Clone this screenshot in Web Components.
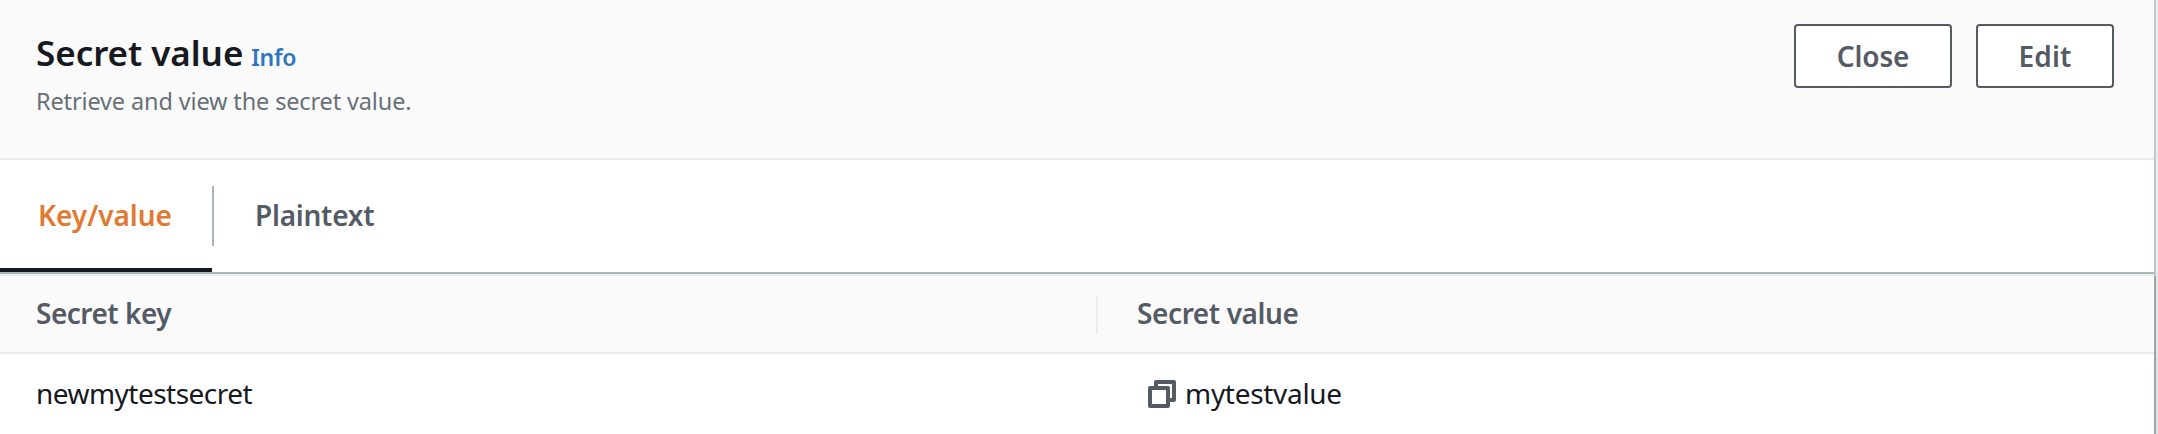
<!DOCTYPE html>
<html lang="en">
<head>
<meta charset="utf-8">
<title>Secret value</title>
<style>
html, body { margin: 0; height: 100%; background: #fff; overflow: hidden; }
body { font-family: "Noto Sans", "Open Sans", sans-serif; font-size: 28px; line-height: 44px; color: #16191f; }
</style>
</head>
<body>
<secret-panel>
  <panel-header slot="header">
    <span slot="title">Secret value</span>
    <span slot="info">Info</span>
    <span slot="description">Retrieve and view the secret value.</span>
    <action-button slot="actions">Close</action-button>
    <action-button slot="actions" style="--button-width:138px;--spacing:.1px">Edit</action-button>
  </panel-header>
  <tab-bar slot="tabs">
    <tab-item active>Key/value</tab-item>
    <tab-item>Plaintext</tab-item>
  </tab-bar>
  <secret-table>
    <span slot="key-head">Secret key</span>
    <span slot="value-head">Secret value</span>
    <span slot="key">newmytestsecret</span>
    <copy-value slot="value">mytestvalue</copy-value>
  </secret-table>
</secret-panel>
<script>
const define = (name, html) => customElements.define(name, class extends HTMLElement {
  constructor() {
    super();
    this.attachShadow({ mode: 'open' }).innerHTML = html;
  }
});

define('secret-panel', `
<style>
:host { display: grid; grid-template-columns: 1fr 2px 2px; height: 434px; }
main { min-width: 0; }
.edge { background: linear-gradient(#bfc8c8 0 276px, #9ca5a8 276px); }
.outer { background: linear-gradient(#eaeded 0 276px, #e1e4e5 276px); }
</style>
<main><slot name="header"></slot><slot name="tabs"></slot><slot></slot></main>
<div class="edge"></div><div class="outer"></div>`);

define('panel-header', `
<style>
:host { display: flex; justify-content: space-between; align-items: flex-start; box-sizing: border-box;
  height: 160px; padding: 24px 40px 0 36px; background: #fafafa; border-bottom: 2px solid #eaeded; }
.text { padding-top: 7px; }
.heading { display: flex; align-items: baseline; gap: 8px; height: 44px; white-space: nowrap; }
h2 { margin: 0; font-size: 35px; font-weight: 600; line-height: 44px; letter-spacing: -.05px; }
.info { font-size: 23px; font-weight: 600; letter-spacing: -.3px; color: #2f76c2; }
p { margin: 8px 0 0; font-size: 23.5px; line-height: 36px; letter-spacing: -.14px; color: #687078; }
.actions { display: flex; gap: 24px; }
</style>
<div class="text">
  <div class="heading"><h2><slot name="title"></slot></h2><span class="info"><slot name="info"></slot></span></div>
  <p><slot name="description"></slot></p>
</div>
<div class="actions"><slot name="actions"></slot></div>`);

define('action-button', `
<style>
:host { display: block; width: var(--button-width, 158px); }
button { display: block; width: 100%; height: 64px; padding: 0; box-sizing: border-box; background: #fff;
  border: 2px solid #545b64; border-radius: 4px; font: 600 28px/58px "Noto Sans", sans-serif;
  letter-spacing: var(--spacing, -.1px); color: #545b64; }
</style>
<button><slot></slot></button>`);

define('tab-bar', `
<style>
:host { display: flex; box-sizing: border-box; height: 114px; border-bottom: 2px solid #aab7b8; }
</style>
<slot></slot>`);

define('tab-item', `
<style>
:host { display: flex; flex-direction: column; justify-content: space-between; color: #545b64;
  font-weight: 600; letter-spacing: -.25px; }
.label { margin-top: 26px; height: 60px; padding: 7px 40px 0 41px; box-sizing: border-box; }
.bar { height: 4px; }
:host([active]) { color: #e07a33; letter-spacing: -.05px; }
:host([active]) .label { width: 214px; padding: 7px 0 0 38px; border-right: 2px solid #aab7b8; }
:host([active]) .bar { margin-right: 2px; background: #16191f; }
</style>
<div class="label"><slot></slot></div><div class="bar"></div>`);

define('secret-table', `
<style>
:host { display: block; }
.row { display: grid; grid-template-columns: 1098px 1fr; }
.head { height: 80px; box-sizing: border-box; background: #fafafa; border: solid #eaeded; border-width: 2px 0;
  font-weight: 600; color: #545b64; letter-spacing: -.5px; }
.head div { height: 38px; margin-top: 20px; padding-left: 36px; box-sizing: border-box; line-height: 34px; }
.head div:first-child { border-right: 2px solid #eaeded; }
.head div + div { padding-left: 39px; letter-spacing: -.4px; }
.body { padding-top: 17px; letter-spacing: -.53px; }
.body div { padding-left: 36px; }
.body div + div { padding-left: 50px; }
</style>
<div class="row head"><div><slot name="key-head"></slot></div><div><slot name="value-head"></slot></div></div>
<div class="row body"><div><slot name="key"></slot></div><div><slot name="value"></slot></div></div>`);

define('copy-value', `
<style>
:host { display: flex; gap: 9px; letter-spacing: -.3px; }
svg { width: 28px; height: 28px; margin-top: 9px; flex: none; }
</style>
<svg viewBox="0 0 28 28" fill="none" stroke="#545b64" stroke-width="4" stroke-linejoin="round">
  <path d="M8 6V2H26V20H22"/><rect x="2" y="8" width="18" height="18"/>
</svg>
<span><slot></slot></span>`);
</script>
</body>
</html>
